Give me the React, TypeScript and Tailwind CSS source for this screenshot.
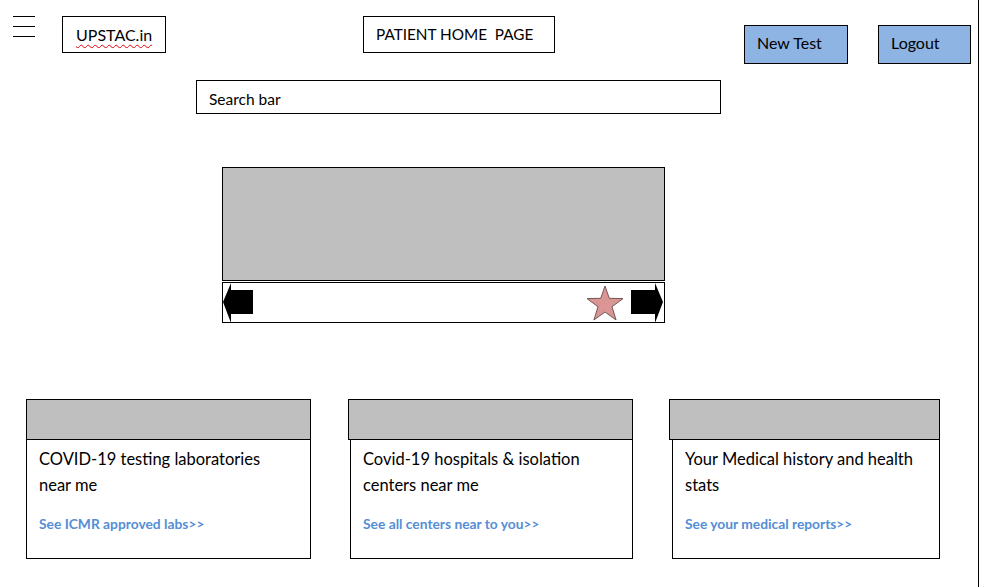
import React from "react";

const font = { fontFamily: "Lato, 'Open Sans', sans-serif" };

function LeftArrow() {
  return (
    <svg width="31" height="40" viewBox="0 0 31 40" className="block">
      <polygon points="0,19 8,0 8,7 30,7 30,31 8,31 8,40" fill="black" />
    </svg>
  );
}

function RightArrow() {
  return (
    <svg width="33" height="40" viewBox="0 0 33 40" className="block">
      <polygon points="0,7 24,7 24,0 32,19 24,40 24,31 0,31" fill="black" />
    </svg>
  );
}

function Star() {
  return (
    <svg width="38" height="36" viewBox="0 0 38 36" className="block">
      <polygon
        points="19,1 23.3,13.3 37,13.6 26,21.7 30.1,35 19,27 7.9,35 12,21.7 1,13.6 14.7,13.3"
        fill="#d99694"
        stroke="#5a3a3a"
        strokeWidth="0.8"
      />
    </svg>
  );
}

type CardProps = {
  title: string[];
  link: string;
  headW: string;
  bodyW: string;
  bodyMl: string;
};

function Card({ title, link, headW, bodyW, bodyMl }: CardProps) {
  return (
    <div className="flex flex-col">
      <div className={`${headW} h-[41px] bg-[#bfbfbf] border border-black`} />
      <div className={`${bodyW} ${bodyMl} h-[119px] border border-t-0 border-black pl-3 pt-[6px]`}>
        <div className="text-[16.5px] leading-[26px] text-black">
          {title.map((t) => (
            <div key={t}>{t}</div>
          ))}
        </div>
        <div className="mt-[16px] text-[13.8px] font-bold text-[#558ed5]">{link}</div>
      </div>
    </div>
  );
}

export default function App() {
  return (
    <div className="w-[979px] h-[587px] border-r border-black bg-white overflow-hidden" style={font}>
      {/* top bar */}
      <div className="flex items-start pt-4">
        <div className="ml-[13px] w-[22px] flex flex-col gap-[9px]">
          <div className="h-px bg-black" />
          <div className="h-px bg-black" />
          <div className="h-px bg-black" />
        </div>
        <div className="ml-[27px] w-[104px] h-[37px] border border-black flex items-center pl-[13px]">
          <span className="text-[16px] underline decoration-wavy decoration-red-600 decoration-1 underline-offset-[3px]">
            UPSTAC.in
          </span>
        </div>
        <div className="ml-[197px] w-[192px] h-[37px] border border-black flex items-center pl-[12px] text-[15.3px] whitespace-pre">
          PATIENT HOME  PAGE
        </div>
        <button className="ml-[189px] mt-[9px] w-[104px] h-[39px] bg-[#8eb4e3] border border-black text-[16px] text-left pl-[12px] pb-[4px]">
          New Test
        </button>
        <button className="ml-[30px] mt-[9px] w-[93px] h-[39px] bg-[#8eb4e3] border border-black text-[16px] text-left pl-[12px] pb-[4px]">
          Logout
        </button>
      </div>

      {/* search */}
      <div className="ml-[196px] mt-[16px] w-[525px] h-[34px] border border-black flex items-center pl-3 pt-[5px] text-[15.5px]">
        Search bar
      </div>

      {/* slider */}
      <div className="ml-[222px] mt-[53px] w-[443px]">
        <div className="h-[114px] bg-[#bfbfbf] border border-black" />
        <div className="mt-[1px] h-[41px] border border-black flex items-center justify-between">
          <LeftArrow />
          <div className="flex items-center gap-[7px]">
            <Star />
            <RightArrow />
          </div>
        </div>
      </div>

      {/* cards */}
      <div className="flex mt-[76px] ml-[26px]">
        <Card
          title={["COVID-19 testing laboratories", "near me"]}
          link="See ICMR approved labs>>"
          headW="w-[285px]"
          bodyW="w-[285px]"
          bodyMl="ml-0"
        />
        <div className="ml-[37px]">
          <Card
            title={["Covid-19 hospitals & isolation", "centers near  me"]}
            link="See all centers near to you>>"
            headW="w-[285px]"
            bodyW="w-[283px]"
            bodyMl="ml-[2px]"
          />
        </div>
        <div className="ml-[36px]">
          <Card
            title={["Your Medical history and health", "stats"]}
            link="See your medical reports>>"
            headW="w-[271px]"
            bodyW="w-[268px]"
            bodyMl="ml-[3px]"
          />
        </div>
      </div>
    </div>
  );
}
